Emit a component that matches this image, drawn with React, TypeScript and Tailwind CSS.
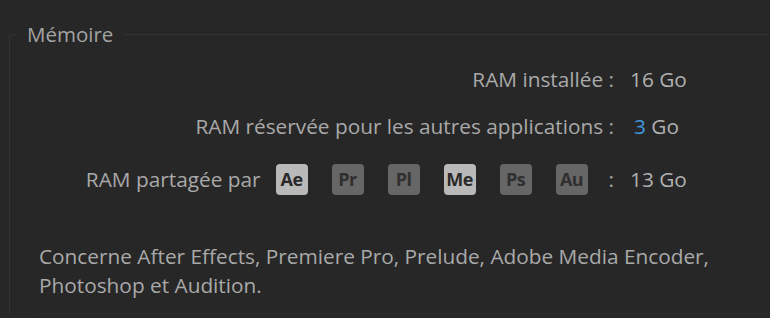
const apps = [
  { code: 'Ae', on: true },
  { code: 'Pr', on: false },
  { code: 'Pl', on: false },
  { code: 'Me', on: true },
  { code: 'Ps', on: false },
  { code: 'Au', on: false },
];

function Badge({ code, on }: { code: string; on: boolean }) {
  return (
    <span
      className={
        on
          ? 'flex h-[31px] w-[32px] items-center justify-center rounded-[4px] bg-[#b9b9b9] text-[18px] font-bold tracking-[-0.5px] text-[#2a2a2a]'
          : 'flex h-[31px] w-[32px] items-center justify-center rounded-[4px] bg-[#666666] text-[18px] font-bold tracking-[-0.5px] text-[#303030]'
      }
    >
      {code}
    </span>
  );
}

export default function App() {
  return (
    <div
      className="h-[318px] w-[770px] overflow-hidden bg-[#272727] pt-[23px] text-[20.8px] text-[#a9a9a9]"
      style={{ fontFamily: '"Open Sans", "Noto Sans", sans-serif' }}
    >
      <fieldset className="ml-[9px] min-w-0 rounded-tl-[3px] border-l border-t border-[#323232] p-0">
        <legend className="ml-[6px] px-[11px] text-[20.5px] leading-[22px] text-[#a3a3a3]">Mémoire</legend>

        <div className="mt-[20px] flex flex-col">
          <div className="flex h-[30px] items-center">
            <span className="w-[604px] text-right">RAM installée :</span>
            <span className="ml-[16px] text-[#b1b1b1]">16 Go</span>
          </div>
          <div className="mt-[17px] flex h-[30px] items-center">
            <span className="w-[604px] text-right">RAM réservée pour les autres applications :</span>
            <span className="ml-[20px] text-[#b1b1b1]">
              <span className="text-[#3d9be0]">3</span> Go
            </span>
          </div>
          <div className="mt-[22px] flex h-[31px] items-center">
            <div className="flex w-[604px] items-center justify-end">
              <span>RAM partagée par</span>
              <div className="ml-[15px] flex gap-[24px]">
                {apps.map((a) => (
                  <Badge key={a.code} code={a.code} on={a.on} />
                ))}
              </div>
              <span className="ml-[21px]">:</span>
            </div>
            <span className="ml-[16px] text-[#b1b1b1]">13 Go</span>
          </div>
          <p className="ml-[29px] mt-[47px] whitespace-nowrap leading-[29px]">
            Concerne After Effects, Premiere Pro, Prelude, Adobe Media Encoder,
            <br />
            Photoshop et Audition.
          </p>
          <div className="ml-[28px] mt-[13px] h-px bg-[#2d2d2d]" />
        </div>
      </fieldset>
    </div>
  );
}
